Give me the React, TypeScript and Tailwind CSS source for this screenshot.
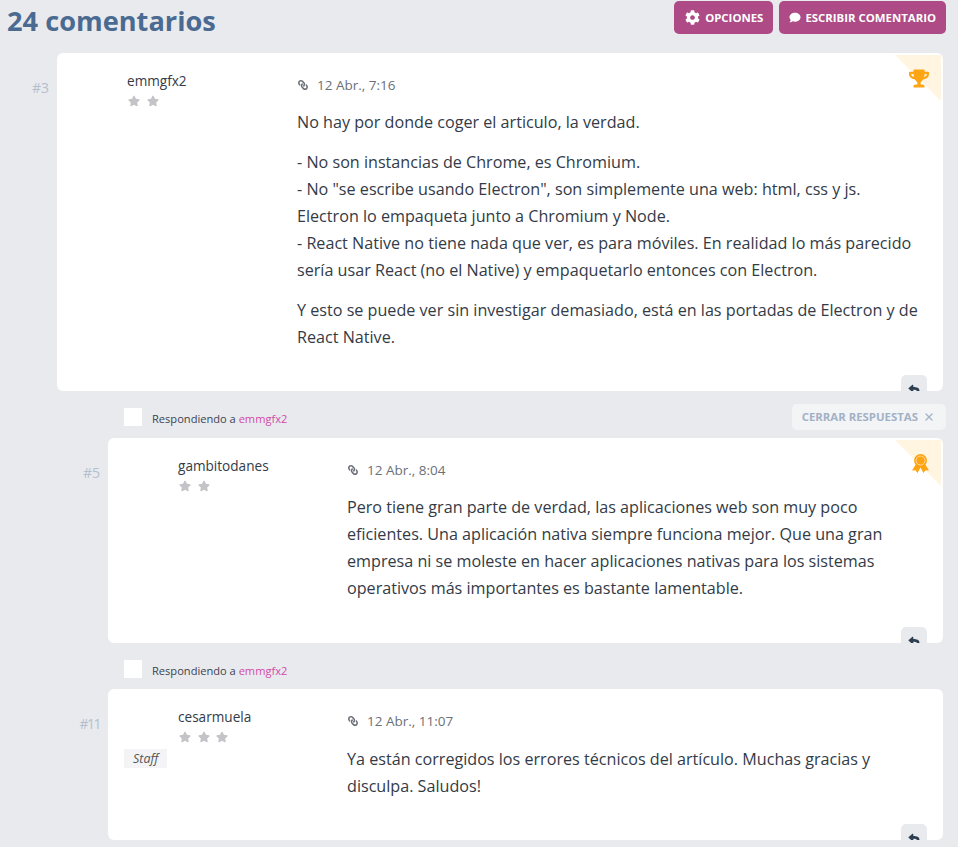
import { X } from 'lucide-react'
import { FaCog, FaComment, FaLink, FaReply, FaStar, FaTrophy } from 'react-icons/fa'

function Medal() {
  return (
    <svg viewBox="0 0 17 19" className="h-[19px] w-[17px]">
      <path d="M4 10 0 16.500l3.500-.3L5.500 19l3-5.500 3 5.500 2-2.800 3.500.3L13 10z" fill="#ffa412" />
      <circle cx="8.500" cy="6.500" r="6.500" fill="#ffa412" />
      <circle cx="8.500" cy="6.500" r="4.500" fill="none" stroke="#ffd9a0" strokeWidth="1" />
    </svg>
  )
}

function ReplyTab() {
  return (
    <div className="absolute bottom-0 right-[16px] flex h-[16px] w-[26px] justify-center overflow-hidden rounded-t-[5px] bg-[#e9eaee] pt-[9px]">
      <FaReply className="h-[11px] w-[12px] shrink-0 text-[#2c3e50]" />
    </div>
  )
}

function Stars({ count }: { count: number }) {
  return (
    <div className="mt-[5px] flex gap-[6.500px] pl-[1px]">
      {Array.from({ length: count }).map((_, i) => (
        <FaStar key={i} className="h-[12px] w-[12px] text-[#c3c3c8]" />
      ))}
    </div>
  )
}

function Replying() {
  return (
    <div className="flex h-[18px] items-center pl-[16px]">
      <div className="h-[18px] w-[18px] bg-white" />
      <span className="ml-[10px] mt-[4px] text-[11.100px] text-[#3a4350]">
        Respondiendo a <span className="text-[#d349a8]">emmgfx2</span>
      </span>
    </div>
  )
}

interface CommentProps {
  num: string
  name: string
  stars: number
  date: string
  staff?: boolean
  nested?: boolean
  badge?: 'trophy' | 'medal'
  height: string
  children: React.ReactNode
}

function Comment({ num, name, stars, date, staff, nested, badge, height, children }: CommentProps) {
  return (
    <div className="flex">
      <div className={`w-[57px] shrink-0 pr-[8px] pt-[25px] text-right text-[14px] leading-[20px] text-[#b4bfce] ${num.length > 2 ? 'tracking-[-1.500px]' : ''}`}>{num}</div>
      <div className={`relative flex flex-1 rounded-[6px] bg-white ${height}`}>
        <div className={`${nested ? 'w-[239px]' : 'w-[240px]'} shrink-0 pl-[16px] pt-[19px]`}>
          <div className="pl-[54px]">
            <div className="text-[13.600px] leading-[18px] text-[#333b47]">{name}</div>
            <Stars count={stars} />
          </div>
          {staff && (
            <div className="mt-[6px] inline-block bg-[#f4f4f6] px-[9px] text-[12.500px] italic leading-[19px] text-[#555]">Staff</div>
          )}
        </div>
        <div className="flex-1 pr-[24px] pt-[22px]">
          <div className="flex h-[20px] items-center text-[13.500px] text-[#6b7078]">
            <FaLink className="ml-[1px] mr-[9px] h-[10px] w-[10px] -scale-x-100 text-[#6b7078]" />
            {date}
          </div>
          <div className={`${staff ? 'mt-[15px]' : 'mt-[14px]'} space-y-[13px] text-[16.150px] leading-[27px] text-[#333b47]`}>{children}</div>
        </div>
        {badge && (
          <>
            <div className="absolute right-[2px] top-[2px] h-0 w-0 border-l-[46px] border-t-[46px] border-l-transparent border-t-[#fff5e1]" />
            <div className="absolute right-[14px] top-[16px]">
              {badge === 'trophy' ? <FaTrophy className="h-[19px] w-[20px] text-[#ffa412]" /> : <Medal />}
            </div>
          </>
        )}
        <ReplyTab />
      </div>
    </div>
  )
}

export default function App() {
  return (
    <div className="h-[847px] overflow-hidden bg-[#e9eaee] pr-[15px] font-['Open_Sans','Noto_Sans',sans-serif]">
      <div className="flex h-[53px] items-start justify-between pl-[7px]">
        <h1 className="text-[27.200px] font-bold leading-[42px] text-[#4a6a92]">24 comentarios</h1>
        <div className="-mr-[3px] mt-[1px] flex gap-[6px]">
          <button className="flex h-[33px] items-center rounded-[5px] bg-[#ae4a85] pl-[11px] pr-[10px] text-[11.400px] font-bold text-white">
            <FaCog className="mr-[5px] h-[15px] w-[15px]" />
            OPCIONES
          </button>
          <button className="flex h-[33px] items-center rounded-[5px] bg-[#ae4a85] pl-[10px] pr-[10px] text-[11.400px] font-bold text-white">
            <FaComment className="mr-[4px] h-[11px] w-[12px]" />
            ESCRIBIR COMENTARIO
          </button>
        </div>
      </div>

      <Comment num="#3" name="emmgfx2" stars={2} date="12 Abr., 7:16" badge="trophy" height="h-[338px]">
        <p>No hay por donde coger el articulo, la verdad.</p>
        <p>
          - No son instancias de Chrome, es Chromium.
          <br />- No "se escribe usando Electron", son simplemente una web: html, css y js. Electron lo empaqueta junto a Chromium y Node.
          <br />- React Native no tiene nada que ver, es para móviles. En realidad lo más parecido sería usar React (no el Native) y empaquetarlo entonces con Electron.
        </p>
        <p>Y esto se puede ver sin investigar demasiado, está en las portadas de Electron y de React Native.</p>
      </Comment>

      <div className="relative pl-[108px] pt-[17px]">
        <div className="h-[30px]">
          <Replying />
        </div>
        <div className="absolute -right-[3px] top-[13px] flex h-[26px] items-center rounded-[5px] bg-[#f3f4f6] pl-[10px] pr-[11px] text-[11.400px] font-bold text-[#a3b1c6]">
          CERRAR RESPUESTAS
          <X className="ml-[5px] h-[12px] w-[12px]" strokeWidth={2.500} />
        </div>
        <div className="-ml-[57px]">
          <Comment num="#5" name="gambitodanes" stars={2} date="12 Abr., 8:04" badge="medal" nested height="h-[205px]">
            <p>Pero tiene gran parte de verdad, las aplicaciones web son muy poco eficientes. Una aplicación nativa siempre funciona mejor. Que una gran empresa ni se moleste en hacer aplicaciones nativas para los sistemas operativos más importantes es bastante lamentable.</p>
          </Comment>
        </div>
        <div className="h-[46px] pt-[17px]">
          <Replying />
        </div>
        <div className="-ml-[57px]">
          <Comment num="#11" name="cesarmuela" stars={3} date="12 Abr., 11:07" staff nested height="h-[151px]">
            <p>Ya están corregidos los errores técnicos del artículo. Muchas gracias y disculpa. Saludos!</p>
          </Comment>
        </div>
      </div>
    </div>
  )
}
